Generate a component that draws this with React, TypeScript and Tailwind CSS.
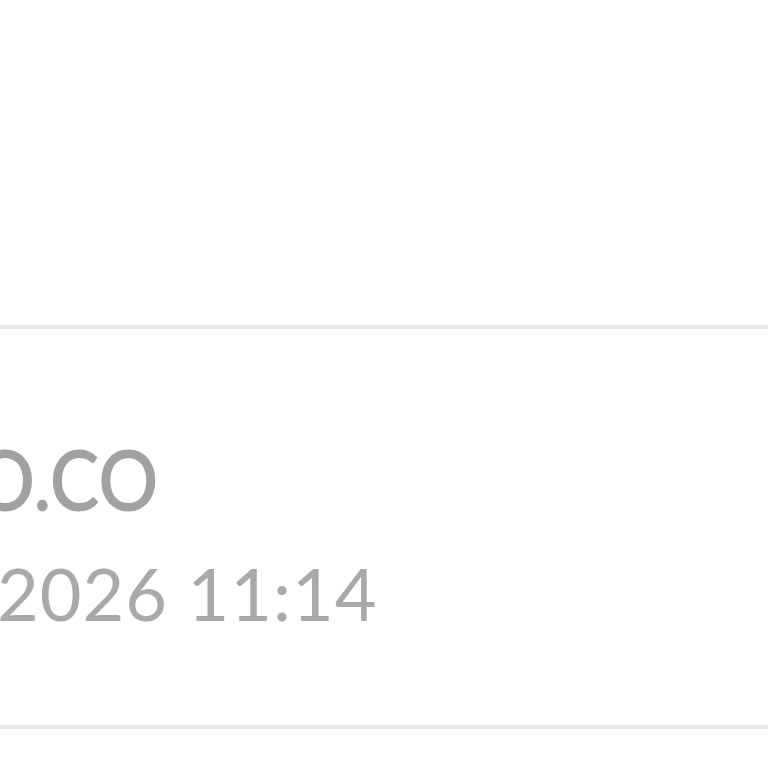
export default function App() {
  return (
    <div className="w-[768px] h-[768px] overflow-hidden bg-white flex flex-col" style={{ fontFamily: 'Lato, "Noto Sans", sans-serif' }}>
      <div className="h-[325px] shrink-0" />
      <div className="h-[4px] shrink-0 bg-[#e9e9e9]" />
      <div className="h-[396px] shrink-0 pt-[100px] flex flex-col overflow-hidden">
        <div className="origin-left scale-x-[0.89] ml-[-25px] text-[84px] leading-[100px] font-semibold text-[#a1a1a1] whitespace-nowrap uppercase">
          o.co
        </div>
        <div className="mt-[21px] ml-[-3px] text-[72px] leading-[86px] font-normal tracking-[1px] text-[#a9a9a9] whitespace-nowrap">
          2026 11:14
        </div>
      </div>
      <div className="h-[4px] shrink-0 bg-[#e9e9e9]" />
    </div>
  );
}
